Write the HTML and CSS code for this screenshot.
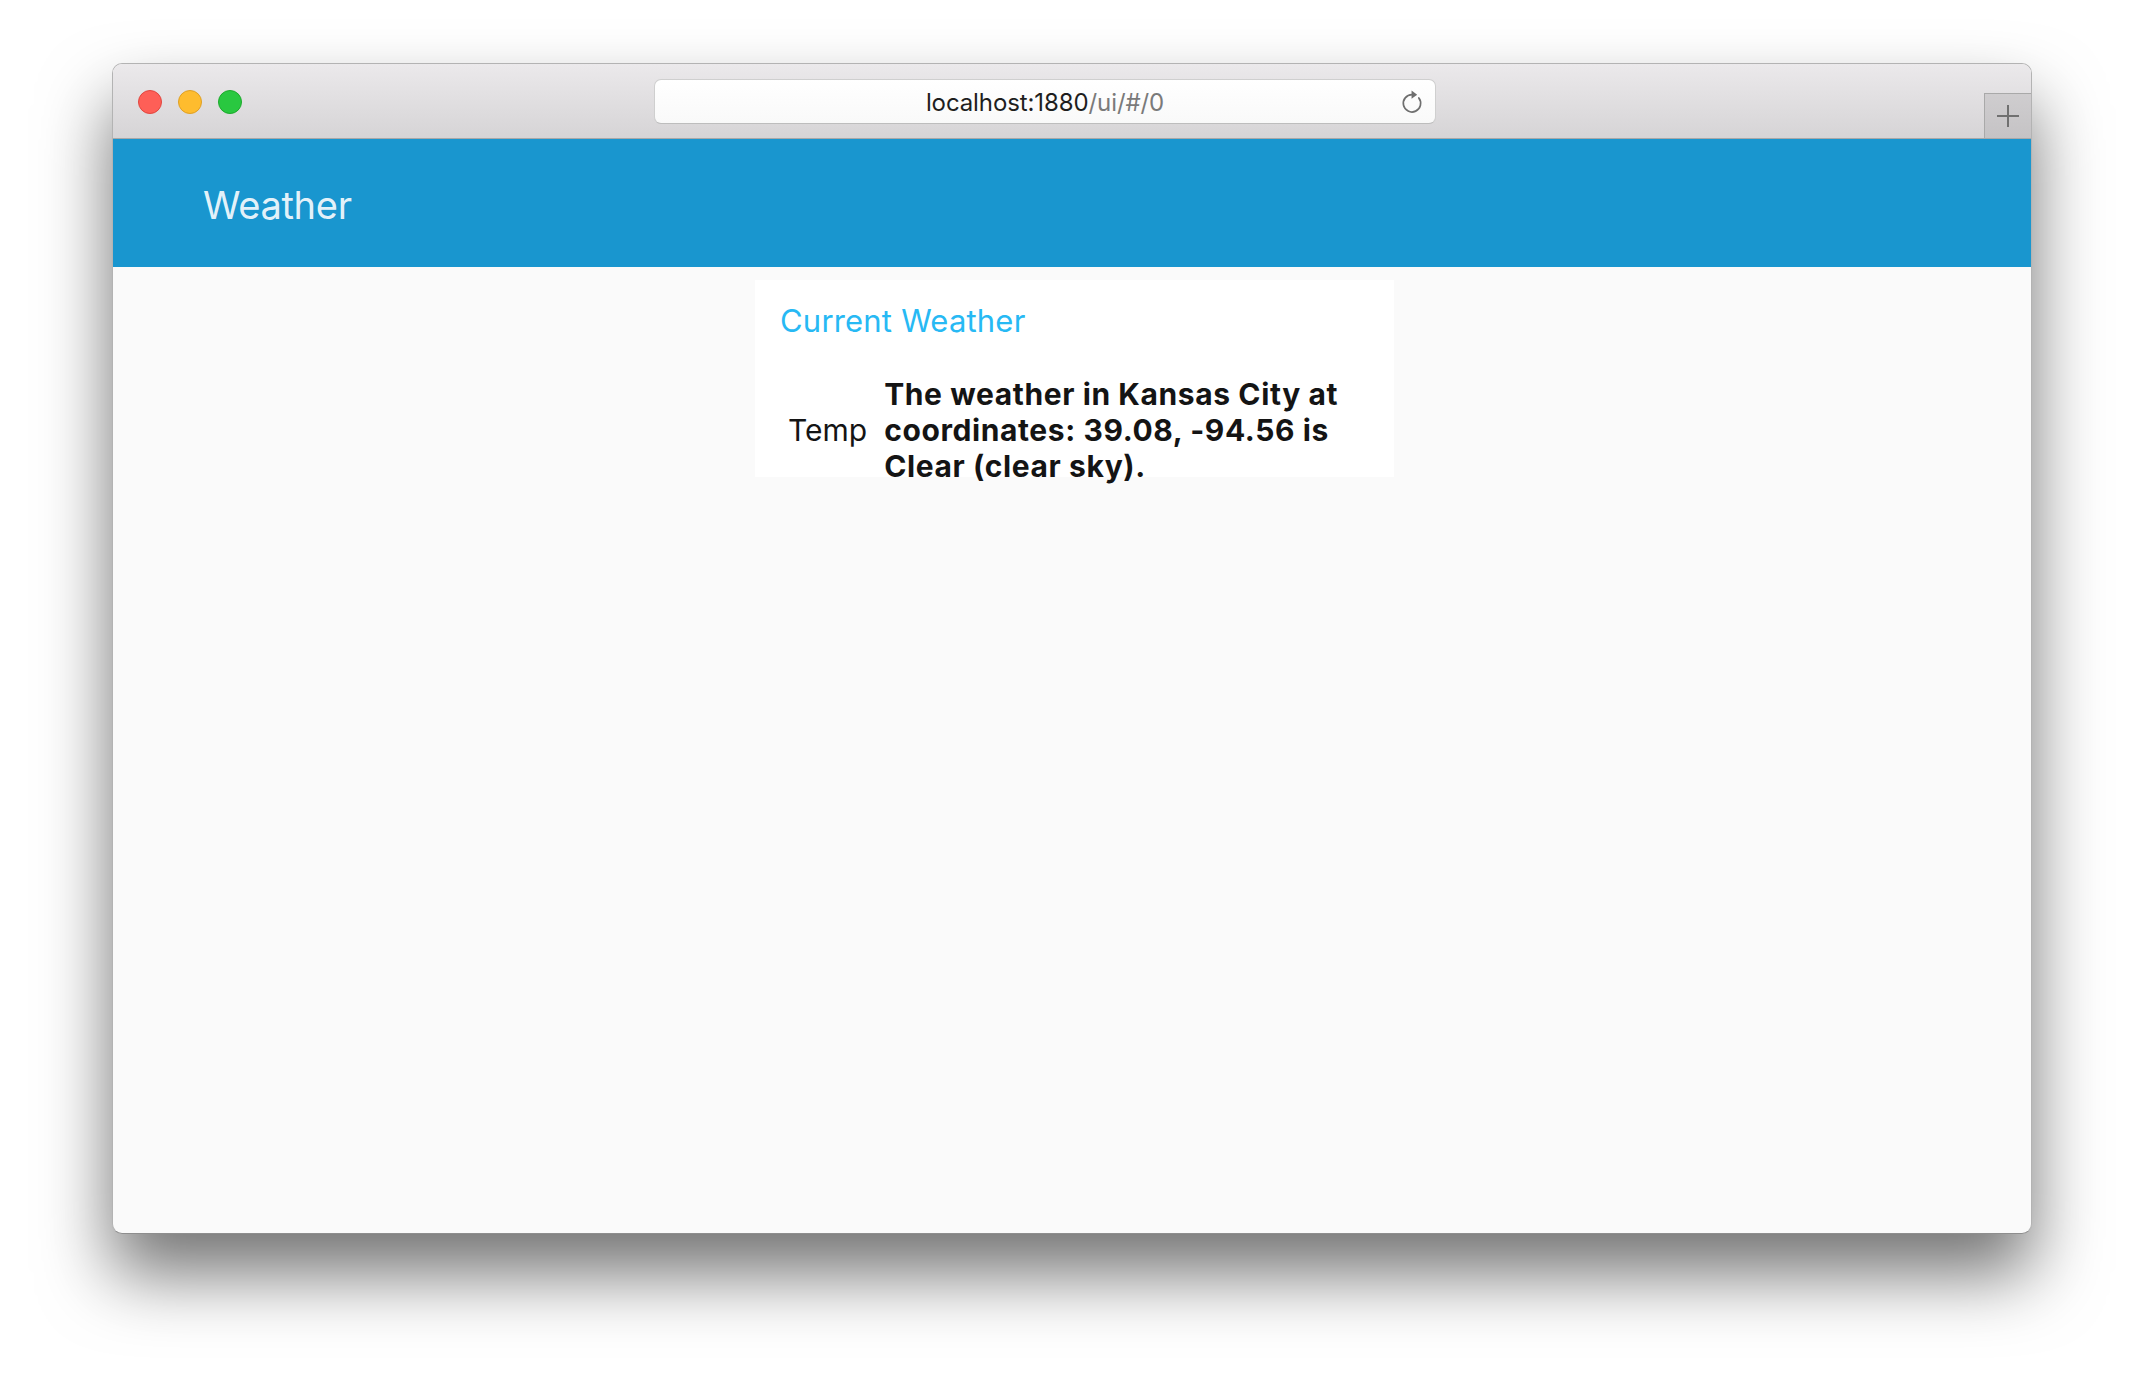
FILE: index.html
```html
<!DOCTYPE html>
<html lang="en">
<head>
<meta charset="utf-8">
<title>Weather</title>
<link rel="stylesheet" href="styles.css">
</head>
<body>
<div class="stage">
  <div class="window">
    <div class="titlebar">
      <div class="lights">
        <span class="light red"></span>
        <span class="light yellow"></span>
        <span class="light green"></span>
      </div>
      <div class="urlbar">
        <span class="url-spacer"></span>
        <span class="url"><span class="host">localhost:1880</span><span class="path">/ui/#/0</span></span>
        <svg class="reload" viewBox="0 0 24 24" width="26" height="26">
          <path d="M12 5.2 A8 8 0 1 0 18.3 8.3" fill="none" stroke="#6f6f6f" stroke-width="1.6" stroke-linecap="round"/>
          <path d="M11.6 1.4 L16.8 5.2 L11.6 9 Z" fill="#6f6f6f"/>
        </svg>
      </div>
      <div class="spacer"></div>
      <div class="newtab">
        <svg viewBox="0 0 24 24" width="24" height="24">
          <path d="M12 1 V23 M1 12 H23" stroke="#707070" stroke-width="2"/>
        </svg>
      </div>
    </div>
    <div class="toolbar">
      <span class="app-title">Weather</span>
    </div>
    <div class="content">
      <div class="card">
        <div class="card-title">Current Weather</div>
        <div class="text-row">
          <span class="label">Temp</span>
          <span class="value">The weather in Kansas City at coordinates: 39.08, -94.56 is Clear (clear sky).</span>
        </div>
      </div>
    </div>
  </div>
</div>
</body>
</html>
```

FILE: styles.css
```css
html, body {
  margin: 0;
  padding: 0;
  background: #ffffff;
  font-family: Inter, "Liberation Sans", sans-serif;
}

.stage {
  padding: 63px 0 0 112px;
  min-height: 1394px;
  box-sizing: border-box;
}

.window {
  width: 1920px;
  height: 1171px;
  box-sizing: border-box;
  border: 1px solid #b3b3b3;
  border-bottom-color: #8e8e8e;
  border-radius: 10px;
  overflow: hidden;
  display: flex;
  flex-direction: column;
  box-shadow: 0 40px 70px 0 rgba(0, 0, 0, 0.55);
  background: #fafafa;
}

.titlebar {
  height: 74px;
  flex: none;
  display: flex;
  align-items: flex-start;
  background: linear-gradient(#ebe9eb, #d6d4d6);
  border-bottom: 1px solid #a8a8a8;
}

.lights {
  display: flex;
  gap: 16px;
  margin: 26px 0 0 25px;
}

.light {
  width: 24px;
  height: 24px;
  box-sizing: border-box;
  border-radius: 50%;
  border: 1px solid;
}

.red { background: #fe5f57; border-color: #e1463f; }
.yellow { background: #febc2e; border-color: #dfa024; }
.green { background: #29c840; border-color: #1daa2c; }

.urlbar {
  margin: 15px 0 0 412px;
  width: 782px;
  height: 45px;
  box-sizing: border-box;
  border: 1px solid #cfcfcf;
  border-bottom-color: #bdbdbd;
  border-radius: 7px;
  background: linear-gradient(#ffffff, #f9f9f9);
  display: grid;
  grid-template-columns: 1fr auto 1fr;
  align-items: center;
}

.url {
  font-size: 24px;
  letter-spacing: -0.1px;
  line-height: 1;
  color: #1e1e1e;
  padding-top: 2px;
}

.path {
  color: #7a7a7a;
}

.reload {
  justify-self: end;
  margin-right: 10px;
  display: block;
}

.spacer {
  flex: 1;
}

.newtab {
  margin-top: 29px;
  width: 47px;
  height: 45px;
  box-sizing: border-box;
  border-left: 1px solid #a9a9a9;
  border-top: 1px solid #a9a9a9;
  background: linear-gradient(#cfcdcf, #c5c3c5);
  display: flex;
  align-items: center;
  justify-content: center;
}

.newtab svg {
  display: block;
}

.toolbar {
  height: 128px;
  flex: none;
  background: #1996cf;
  display: flex;
  align-items: center;
  padding: 4px 0 0 90px;
  box-sizing: border-box;
}

.app-title {
  font-size: 38px;
  line-height: 1;
  color: rgba(255, 255, 255, 0.9);
  letter-spacing: -0.3px;
}

.content {
  flex: 1;
  display: flex;
  justify-content: center;
  align-items: flex-start;
  padding: 13px 0 0 5px;
}

.card {
  width: 639px;
  height: 197px;
  box-sizing: border-box;
  background: #ffffff;
  padding: 26px 25px 0 25px;
}

.card-title {
  font-size: 31px;
  line-height: 30px;
  color: #27b9f4;
  letter-spacing: 0.2px;
}

.text-row {
  margin: 40px 0 0 8px;
  display: flex;
  align-items: center;
  gap: 17px;
}

.label {
  font-size: 30px;
  line-height: 36px;
  color: #141414;
}

.value {
  width: 495px;
  font-size: 30px;
  line-height: 36px;
  font-weight: 700;
  color: #141414;
  letter-spacing: 0.6px;
}
```
